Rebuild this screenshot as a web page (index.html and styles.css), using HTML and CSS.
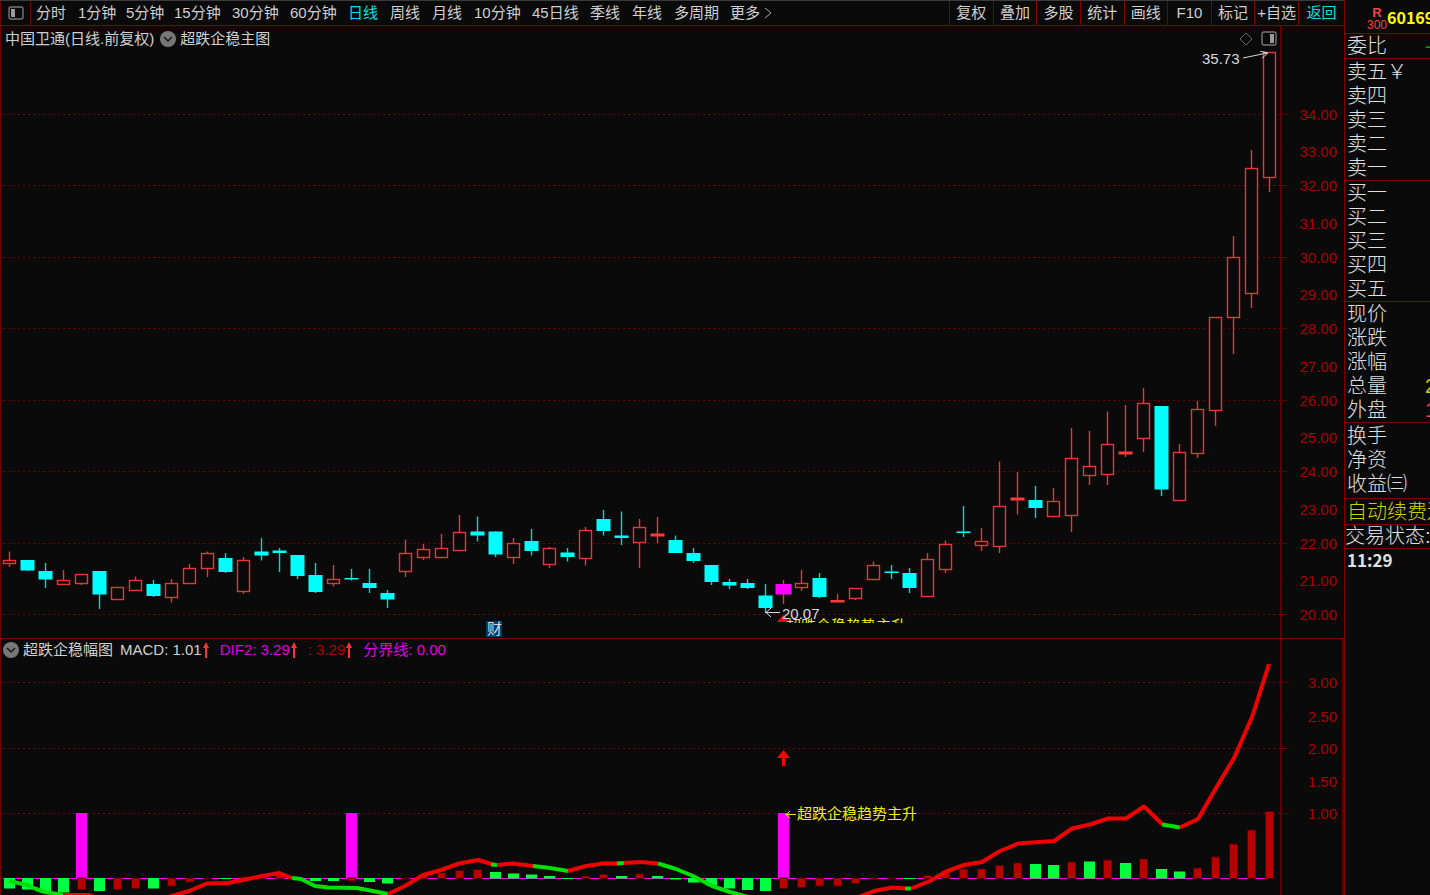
FILE: index.html
```
<!DOCTYPE html>
<html lang="zh-CN">

<head>
    <meta charset="utf-8">
    <title>中国卫通 日线</title>
    <link rel="stylesheet" href="styles.css">
</head>

<body>
    <div class="terminal">
        <main class="main">
            <header class="topbar">
                <button class="layout-btn" aria-label="布局">
                    <svg width="16" height="14" viewBox="0 0 16 14">
                        <rect x="1" y="1" width="14" height="12" rx="2" fill="none" stroke="#777" stroke-width="1.4" />
                        <rect x="3" y="3" width="4" height="8" fill="#999" />
                    </svg>
                </button>
                <nav class="periods">
                    <button class="tab">分时</button>
                    <button class="tab tab-mid">1分钟</button>
                    <button class="tab tab-mid">5分钟</button>
                    <button class="tab tab-long">15分钟</button>
                    <button class="tab tab-long">30分钟</button>
                    <button class="tab tab-long">60分钟</button>
                    <button class="tab active">日线</button>
                    <button class="tab">周线</button>
                    <button class="tab">月线</button>
                    <button class="tab tab-long">10分钟</button>
                    <button class="tab tab-long">45日线</button>
                    <button class="tab">季线</button>
                    <button class="tab">年线</button>
                    <button class="tab tab-wide">多周期</button>
                    <button class="tab tab-more">更多
                        <svg width="8" height="12" viewBox="0 0 8 12">
                            <path d="M1 1 L7 6 L1 11" fill="none" stroke="#aaa" />
                        </svg>
                    </button>
                </nav>
                <div class="tools">
                    <button class="tool">复权</button>
                    <button class="tool">叠加</button>
                    <button class="tool">多股</button>
                    <button class="tool">统计</button>
                    <button class="tool">画线</button>
                    <button class="tool">F10</button>
                    <button class="tool">标记</button>
                    <button class="tool">+自选</button>
                    <button class="tool back">返回</button>
                </div>
            </header>

            <section class="panel">
                <div class="title-row">
                    <div class="title">
                        <span>中国卫通(日线.前复权)</span>
                        <svg class="chevron" width="16" height="16" viewBox="0 0 16 16">
                            <circle cx="8" cy="8" r="8" fill="#777" />
                            <path d="M4 6 L8 10 L12 6" fill="none" stroke="#151515" stroke-width="1.5" />
                        </svg>
                        <span>超跌企稳主图</span>
                        <svg class="corner" width="16" height="16" viewBox="0 0 16 16">
                            <path d="M8 2 L14 8 L8 14 L2 8 Z" fill="none" stroke="#666" />
                        </svg>
                        <svg width="16" height="16" viewBox="0 0 16 16">
                            <rect x="1" y="1" width="14" height="13" rx="2" fill="none" stroke="#777" stroke-width="1.4" />
                            <rect x="9" y="3" width="4" height="9" fill="#999" />
                        </svg>
                    </div>
                </div>
                <svg id="kline" class="chart" viewBox="1 51 1343 587"></svg>
            </section>

            <section class="panel sub">
                <div class="title-row short">
                    <div class="title">
                        <svg class="chevron first" width="16" height="16" viewBox="0 0 16 16">
                            <circle cx="8" cy="8" r="8" fill="#777" />
                            <path d="M4 6 L8 10 L12 6" fill="none" stroke="#151515" stroke-width="1.5" />
                        </svg>
                        <span>超跌企稳幅图</span>
                        <span class="ind">MACD: 1.01<svg class="up" viewBox="0 0 8 18"><path d="M4 1 L7 7 H5 V17 H3 V7 H1 Z" /></svg></span>
                        <span class="ind magenta">DIF2: 3.29<svg class="up" viewBox="0 0 8 18"><path d="M4 1 L7 7 H5 V17 H3 V7 H1 Z" /></svg></span>
                        <span class="ind red">: 3.29<svg class="up" viewBox="0 0 8 18"><path d="M4 1 L7 7 H5 V17 H3 V7 H1 Z" /></svg></span>
                        <span class="ind magenta">分界线: 0.00</span>
                    </div>
                </div>
                <svg id="macd" class="chart" viewBox="1 661 1343 234"></svg>
            </section>
        </main>

        <aside class="quote">
            <div class="code">
                <div class="marks"><b>R</b><span>300</span></div>
                <strong>601698</strong>
            </div>
            <div class="block">
                <div class="row"><span>委比</span><em class="green">-</em></div>
            </div>
            <div class="block sell">
                <div class="row">卖五￥</div>
                <div class="row">卖四</div>
                <div class="row">卖三</div>
                <div class="row">卖二</div>
                <div class="row">卖一</div>
            </div>
            <div class="block">
                <div class="row">买一</div>
                <div class="row">买二</div>
                <div class="row">买三</div>
                <div class="row">买四</div>
                <div class="row">买五</div>
            </div>
            <div class="block">
                <div class="row">现价</div>
                <div class="row">涨跌</div>
                <div class="row">涨幅</div>
                <div class="row"><span>总量</span><em class="yellow">2</em></div>
                <div class="row"><span>外盘</span><em class="light-red">1</em></div>
            </div>
            <div class="block fin">
                <div class="row">换手</div>
                <div class="row">净资</div>
                <div class="row">收益㈢</div>
            </div>
            <div class="block renew">
                <div class="row">自动续费送</div>
            </div>
            <div class="block status">
                <div class="row">交易状态:</div>
            </div>
            <div class="time">11:29</div>
        </aside>
    </div>
    <script src="chart.js"></script>
</body>

</html>
```

FILE: styles.css
```
html,
body {
    margin: 0;
    padding: 0;
    background-color: #0a0a0a;
    color: #d0d0d0;
    font-family: "Liberation Sans", "Noto Sans CJK SC", sans-serif;
    font-size: 15px;
    font-weight: 400;
}

body {
    overflow-x: hidden;
}

button {
    margin: 0;
    padding: 0;
    border: 0;
    background: none;
    color: inherit;
    font: inherit;
    line-height: 22px;
    text-align: left;
    white-space: nowrap;
    cursor: pointer;
}

.terminal {
    display: grid;
    grid-template-columns: minmax(0, 1fr) 86px;
}

.topbar {
    box-sizing: border-box;
    display: flex;
    height: 26px;
    border-top: 1px solid #3a3a3a;
    border-bottom: 1px solid #800000;
}

.layout-btn {
    box-sizing: border-box;
    display: flex;
    align-items: center;
    justify-content: center;
    width: 31px;
    border-left: 1px solid #700000;
    border-right: 1px solid #700000;
}

.periods {
    display: flex;
    flex: 1;
    padding-left: 5px;
}

.tab {
    width: 42px;
}

.tab-mid {
    width: 48px;
}

.tab-long {
    width: 58px;
}

.tab-wide {
    width: 56px;
}

.tab-more {
    display: flex;
    align-items: center;
    gap: 4px;
}

.active,
.back {
    color: #00e0e0;
}

.tools {
    display: flex;
    width: 395px;
}

.tool {
    flex: 1;
    border-left: 1px solid #800000;
    text-align: center;
}

.tool.back {
    flex: 0 0 46px;
}

.panel {
    border-left: 1px solid #700000;
}

.sub {
    border-top: 1px solid #800000;
}

.title-row {
    display: flex;
    height: 25px;
    padding-right: 62px;
}

.title {
    display: flex;
    flex: 1;
    align-items: center;
    padding: 0 3px 0 4px;
    border-right: 2px solid #600000;
    line-height: 20px;
    white-space: nowrap;
}

.title-row.short {
    height: 22px;
    padding-right: 60px;
    border-right: 2px solid #600000;
}

.chevron {
    margin: 0 4px 0 6px;
}

.chevron.first {
    margin-left: -2px;
}

.corner {
    margin: 0 7px 0 auto;
}

.ind {
    display: flex;
    align-items: center;
    margin-left: 7px;
}

.up {
    width: 8px;
    height: 18px;
    margin-right: 3px;
    fill: #ff3232;
}

.magenta {
    color: #e000e0;
}

.red {
    color: #b00000;
}

.chart {
    display: block;
    width: 100%;
}

.chart text {
    font-size: 15px;
}

.axis-line {
    fill: #600000;
}

.axis-label {
    fill: #a80000;
    text-anchor: end;
}

.grid {
    stroke: #700000;
    stroke-dasharray: 2 3;
}

.up-wick {
    stroke: #e83636;
    stroke-width: 1.4;
}

.up-body {
    fill: #0a0a0a;
    stroke: #e83636;
    stroke-width: 1.4;
}

.down-body {
    fill: #00ffff;
}

.signal {
    fill: #ff00ff;
}

.down-wick {
    stroke: #00d8d8;
    stroke-width: 1.4;
}

.zero {
    stroke: #ff00ff;
}

.bar-up {
    fill: #b80000;
    stroke: #500000;
}

.bar-down {
    fill: #00ff40;
}

.dif {
    fill: none;
    stroke-width: 4;
    stroke-linejoin: round;
}

.dif.rise {
    stroke: #f00000;
}

.dif.fall {
    stroke: #00e000;
}

.pointer {
    fill: none;
    stroke: #d8d8d8;
}

.mark {
    fill: #d8d8d8;
}

.note {
    fill: #f0f000;
}

.note-line {
    fill: none;
    stroke: #e0e000;
}

.news {
    fill: #003c70;
}

.quote {
    overflow: hidden;
    border-left: 1px solid #800000;
    color: #e0e0e0;
    font-size: 20px;
    font-weight: 300;
    white-space: nowrap;
}

.code {
    box-sizing: border-box;
    display: flex;
    align-items: center;
    height: 34px;
    padding-left: 22px;
    border-bottom: 1px solid #800000;
}

.code strong {
    color: #ffff00;
    font-family: "Noto Sans CJK SC", sans-serif;
    font-size: 16px;
    font-weight: 700;
    line-height: 32px;
}

.marks {
    display: flex;
    flex-direction: column;
    align-items: center;
    width: 20px;
    padding-top: 4px;
    color: #ff4040;
    font-size: 12px;
    line-height: 13px;
}

.marks b {
    font-size: 13px;
    font-weight: 700;
}

.block {
    border-bottom: 1px solid #800000;
}

.row {
    display: flex;
    height: 24px;
    padding-left: 2px;
    line-height: 24px;
}

.row em {
    margin-left: 38px;
    font-style: normal;
    font-weight: 400;
}

.sell {
    padding-top: 1px;
}

.fin {
    padding: 1px 0 2px;
}

.renew .row {
    height: 25px;
    color: #d0d000;
    line-height: 26px;
}

.status .row {
    height: 23px;
    padding-left: 0;
    line-height: 22px;
}

.time {
    padding-left: 2px;
    font-family: "Noto Sans CJK SC", sans-serif;
    font-size: 17px;
    font-weight: 700;
    line-height: 22px;
}

.green {
    color: #00a000;
}

.yellow {
    color: #d0d000;
}

.light-red {
    color: #ff4040;
}
```

FILE: chart.js
```
const NS = "http://www.w3.org/2000/svg";
const STEP = 18;
const FIRST = 9.5;
const AXIS = 1280;

// [type, body top, body bottom, high, low]; r = hollow, f = flat, c = filled, m = signal day
const candles = [
    ["r", 560, 563.5, 551.5, 567], ["c", 560, 570.5, 560, 571], ["c", 571, 579.5, 563, 588], ["r", 580.5, 584, 570, 585],
    ["r", 574.5, 583, 574, 585], ["c", 571, 594.5, 571, 609], ["r", 587, 599, 587, 600], ["r", 580, 590, 576.5, 590],
    ["c", 584, 596, 580, 597], ["r", 583, 597, 579, 602.5], ["r", 568, 583, 564, 583], ["r", 553, 568, 551.5, 577],
    ["c", 558, 572, 553, 573], ["r", 560.5, 591, 557, 594], ["c", 551.5, 555.5, 538, 560.5], ["c", 550.5, 553, 548, 572],
    ["c", 555, 576, 555, 579], ["c", 575, 592, 563, 593], ["r", 579, 583, 565, 586.5], ["c", 578, 579.5, 569, 580.5],
    ["c", 583, 588, 569, 593], ["c", 593, 599.5, 590, 608], ["r", 553, 571.5, 539.5, 577], ["r", 549.5, 557, 544, 560],
    ["r", 548, 557, 534, 557], ["r", 532, 550.5, 515, 550], ["c", 531.5, 535.5, 516.5, 541.5], ["c", 531.5, 554.5, 531.5, 557],
    ["r", 543, 557, 538, 564], ["c", 541, 551, 529, 555.5], ["r", 548, 564, 547, 568], ["c", 552.5, 557, 548, 561.5],
    ["r", 530.5, 558, 527, 565.5], ["c", 519, 531, 510, 535.5], ["c", 535.5, 538, 511.5, 545], ["r", 527, 542.5, 519, 568],
    ["f", 533.5, 536.5, 517, 543], ["c", 540, 553, 535.5, 553], ["c", 553, 561, 548, 563], ["c", 565, 582, 565, 585],
    ["c", 582, 585.5, 579, 589], ["c", 583, 588, 579, 589], ["c", 595.5, 608, 584, 612], ["m", 584, 594.5, 580, 604],
    ["r", 583.5, 587, 570, 591], ["c", 578, 597, 573, 598], ["f", 600, 602.5, 594, 602], ["r", 588, 598.5, 588, 600],
    ["r", 565.5, 579, 561.5, 579], ["c", 571.5, 573, 565, 579], ["c", 573, 588, 568, 593], ["r", 559.5, 596.5, 553, 596],
    ["r", 544.5, 569, 540.5, 573], ["c", 531.5, 533, 506, 537], ["r", 541, 545, 528, 551], ["r", 506, 546.5, 461.5, 553],
    ["f", 497.5, 500.5, 472, 514.5], ["c", 500, 508, 486, 518], ["r", 501, 516.5, 488, 516], ["r", 458.5, 515, 428, 532],
    ["r", 466, 475, 431, 485], ["r", 444.5, 474, 411.5, 485], ["f", 451.5, 454.5, 405, 457], ["r", 403.5, 438, 388, 452],
    ["c", 406, 489.5, 406, 496], ["r", 452, 500, 444, 500], ["r", 409.5, 453, 401, 458], ["r", 317, 410, 317, 426],
    ["r", 257, 317.5, 236, 354], ["r", 168, 293.5, 150, 308], ["r", 52, 177.5, 52, 192]
];

// bar tip for each day, and its colour
const tips = [
    889, 890, 893, 893, 890, 891.5, 890, 889, 889, 886.5, 882.5, 879.5, 879.5, 877, 874.5, 874.5, 878, 881.5, 881.5, 881.5,
    882.5, 884, 879.5, 874.5, 873, 870.5, 869.5, 872, 873.5, 874.5, 876, 878, 876, 874.5, 876, 874, 876, 880, 883, 886,
    889, 890.5, 891.5, 889, 888, 886.5, 886.5, 884, 880, 879.5, 878, 875.5, 872, 869, 869, 865.5, 863, 864, 865, 862,
    861.5, 860, 863, 859, 869, 871.5, 868, 857, 844, 830, 811.5
];
const colours = "ggggrgrrgrrrgrrrgggrggrrrrrggggg" + "rrgrgggggggrrrrrrrgrrrrrrggrgrgrggrrrrr";

const dif = [
    ["fall", "9,881 27,885 36,889 45,892 63,895"],
    ["rise", "63,895 88,895 100,899"],
    ["rise", "162,899 172,896 189,891 207,883.5 228,883 243,880 262,876 279,873 292,878"],
    ["fall", "292,878 301,879 315,886 328,887.5 357,888 388,894"],
    ["rise", "388,894 405,886 423,875 441,870 459,863.5 478,860 493,864.5"],
    ["fall", "491,864.5 497,865"],
    ["rise", "497,865 513,863.5 533,866"],
    ["fall", "533,866 550,868 568,871"],
    ["rise", "568,871 586,866 603,863.5 618,863.5"],
    ["fall", "617,863.5 624,863"],
    ["rise", "624,863 640,862 658,863.5"],
    ["fall", "658,863.5 676,869 693,876 712,886 730,892 748,897"],
    ["rise", "856,898 874,891 892,887.5 905,888.5"],
    ["fall", "905,888.5 911,888.5"],
    ["rise", "911,888.5 930,881 946,871.5 964,865 982,862 1000,851 1018,843.5 1054,841 1072,828.5 1090,824.5 1108,818.5 1126,818.5 1144,806.5 1162,824"],
    ["fall", "1162,824.5 1180,827.5"],
    ["rise", "1180,827.5 1198,819 1216,788 1234,758 1252,717 1269,664"]
];

function add(parent, name, attrs, text) {
    const el = document.createElementNS(NS, name);
    for (const key in attrs) el.setAttribute(key, attrs[key]);
    if (text) el.textContent = text;
    parent.appendChild(el);
    return el;
}

function rect(parent, cls, x, y, width, height) {
    return add(parent, "rect", { class: cls, x, y, width, height });
}

function path(parent, cls, d) {
    return add(parent, "path", { class: cls, d });
}

function label(parent, cls, x, y, text) {
    return add(parent, "text", { class: cls, x, y }, text);
}

const centre = i => FIRST + STEP * i;

function drawKline(svg) {
    rect(svg, "axis-line", AXIS, 51, 2, 587);
    for (let price = 20; price <= 34; price++) {
        const y = Math.round(615 - (price - 20) * 35.75);
        const even = price % 2 === 0;
        if (even) path(svg, "grid", `M3 ${y - 0.5} H${AXIS}`);
        rect(svg, "axis-line", AXIS, y - 1, even ? 7 : 3, 1);
        label(svg, "axis-label", 1337, y + (even ? 5 : 7), price.toFixed(2));
    }

    candles.forEach(([type, top, bottom, high, low], i) => {
        const x = centre(i);
        const rising = type !== "c";
        path(svg, rising ? "up-wick" : "down-wick", `M${x} ${high} V${low}`);
        if (type === "r") {
            const y = Math.floor(top) + 0.5;
            rect(svg, "up-body", x - 6, y, 12, Math.max(3, Math.round(bottom - y)));
        } else if (type === "f") {
            add(svg, "rect", { x: x - 7, y: top, width: 14, height: bottom - top, fill: "#ff3a3a" });
        } else if (type === "m") {
            rect(svg, "signal", x - 8, top, 16, bottom - top);
        } else {
            rect(svg, "down-body", x - 7, top, 14, bottom - top);
        }
    });

    // the lower edge of the plot cuts the signal note
    const clip = add(svg, "clipPath", { id: "plot" });
    add(clip, "rect", { x: 0, y: 51, width: AXIS, height: 572 });
    const g = add(svg, "g", { "clip-path": "url(#plot)" });
    add(g, "path", { d: "M783 615 L790 622 H777 Z", fill: "#ff0000" });
    label(g, "note", 786, 631, "超跌企稳趋势主升");

    // highest and lowest price
    label(svg, "mark", 1202, 64, "35.73");
    path(svg, "pointer", "M1243 58 L1267 53 M1260 51 L1268 53 L1262 58");
    path(svg, "pointer", "M765 612.5 H780 M771 608 L766 612.5 L771 617");
    label(svg, "mark", 782, 619, "20.07");

    rect(svg, "news", 486, 621, 16, 16);
    label(svg, "mark", 487, 634, "财");
}

function drawMacd(svg) {
    rect(svg, "axis-line", AXIS, 661, 2, 234);
    rect(svg, "axis-line", 1342, 661, 2, 234);
    [["3.00", 682], ["2.50", 716], ["2.00", 748], ["1.50", 781], ["1.00", 813]].forEach(([text, y], i) => {
        const major = i % 2 === 0;
        if (major) path(svg, "grid", `M3 ${y + 0.5} H${AXIS}`);
        rect(svg, "axis-line", AXIS, y, major ? 7 : 3, 1);
        label(svg, "axis-label", 1337, y + 6, text);
    });

    path(svg, "zero", "M3 878.5 H1270");
    [4, 19, 43].forEach(i => rect(svg, "signal", centre(i) - 5.5, 813, 11, 65));
    tips.forEach((tip, i) => {
        const x = centre(i);
        const y = Math.min(tip, 878);
        const height = Math.max(1, Math.abs(tip - 878.5));
        if (colours[i] === "r") rect(svg, "bar-up", x - 4, y, 8, height);
        else rect(svg, "bar-down", x - 5.5, y, 11, height);
    });
    dif.forEach(([dir, points]) => add(svg, "polyline", { class: "dif " + dir, points }));

    add(svg, "path", { d: "M783.5 750 L790 758 H785 V766 H782 V758 H777 Z", fill: "#ff0000" });
    path(svg, "note-line", "M785 814.5 H796 M790 811 L786 814.5 L790 818");
    label(svg, "note", 797, 819, "超跌企稳趋势主升");
}

drawKline(document.getElementById("kline"));
drawMacd(document.getElementById("macd"));
```
